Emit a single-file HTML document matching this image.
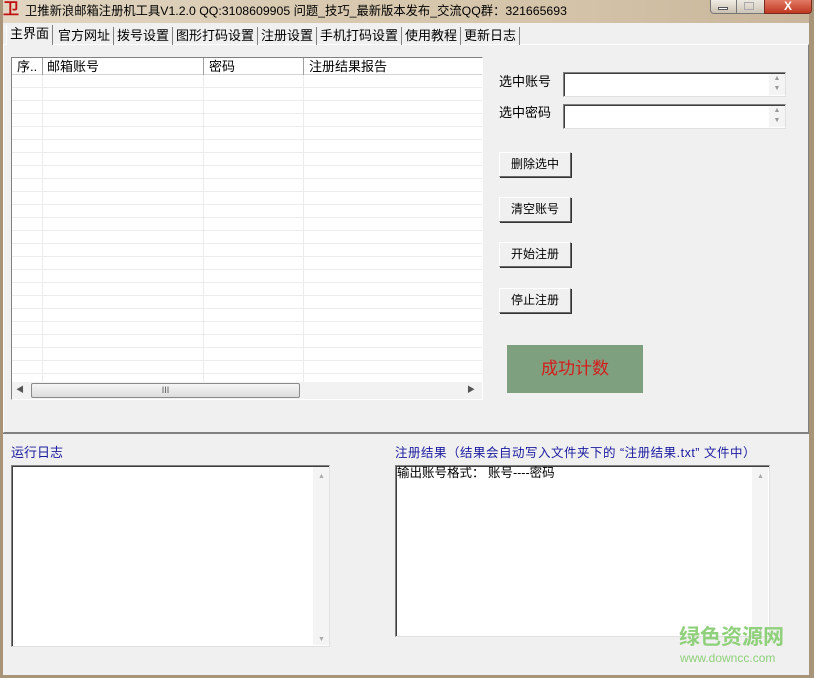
<!DOCTYPE html>
<html><head><meta charset="utf-8"><style>
*{margin:0;padding:0;box-sizing:border-box}
body{width:814px;height:678px;overflow:hidden;background:#f0f0f0;font-family:"Liberation Sans","Noto Sans CJK SC",sans-serif;font-size:12px;color:#000;position:relative}
.a{position:absolute}
.t{position:absolute;white-space:nowrap;line-height:14px}
.btn{position:absolute;width:72px;height:25px;background:#f0f0f0;border:1px solid;border-color:#fff #696969 #696969 #fff;box-shadow:1px 1px 0 #333;text-align:center;line-height:22px}
.in{position:absolute;background:#fff;border:1px solid;border-color:#808080 #e0e0e0 #e0e0e0 #808080;box-shadow:inset 1px 1px 0 #404040}
.sb{position:absolute;background:#f4f4f4;width:16px}
.tab{position:absolute;top:27px;height:18px;line-height:17px;padding:0 3px;border-right:1px solid #808080;font-size:13px}
</style></head><body>
<div class="a" style="left:0;top:0;width:814px;height:23px;background:linear-gradient(90deg,#e2d6c2,#d8c9b0 40%,#d4c3a8 70%,#c8b59b)"></div>
<div class="a" style="left:0;top:0;width:3px;height:678px;background:#a89478"></div>
<div class="a" style="left:809px;top:0;width:5px;height:678px;background:#a89478"></div>
<div class="a" style="left:0;top:675px;width:814px;height:3px;background:#a89478"></div>
<div class="t" style="left:3px;top:3px;font-size:16px;font-weight:bold;color:#c01010;font-family:'Liberation Serif',serif">卫</div>
<div class="t" style="left:25px;top:3px;font-size:12.3px;line-height:16px">卫推新浪邮箱注册机工具V1.2.0 QQ:3108609905 问题_技巧_最新版本发布_交流QQ群：321665693</div>
<div class="a" style="left:710px;top:0;width:27px;height:14px;border:1px solid #777;border-top:0;border-radius:0 0 0 4px;background:linear-gradient(#f0ece4,#c9c0b0)"></div>
<div class="a" style="left:718px;top:7px;width:10px;height:3px;background:#fff;border:1px solid #555"></div>
<div class="a" style="left:737px;top:0;width:27px;height:14px;border-bottom:1px solid #777;background:linear-gradient(#ece8e0,#cdc5b8)"></div>
<div class="a" style="left:744px;top:2px;width:10px;height:8px;border:1px solid #aaa"></div>
<div class="a" style="left:764px;top:0;width:48px;height:14px;border:1px solid #7a2a20;border-top:0;border-radius:0 0 4px 0;background:linear-gradient(#e07a66,#c03820);color:#fff;text-align:center;font-weight:bold;font-size:12px;line-height:12px">X</div>
<div class="a" style="left:3px;top:44px;width:806px;height:389px;border:1px solid;border-color:#fff #808080 #808080 #fff"></div>
<div class="a" style="left:3px;top:23px;width:806px;height:21px;background:#f0f0f0"></div>
<div class="tab" style="left:6px;top:25px;height:20px;border-left:1px solid #fff;background:#f0f0f0">主界面</div>
<div class="tab" style="left:55px">官方网址</div>
<div class="tab" style="left:114px">拨号设置</div>
<div class="tab" style="left:173px">图形打码设置</div>
<div class="tab" style="left:258px">注册设置</div>
<div class="tab" style="left:317px">手机打码设置</div>
<div class="tab" style="left:402px">使用教程</div>
<div class="tab" style="left:461px">更新日志</div>
<div class="a" style="left:11px;top:57px;width:472px;height:343px;background:#fff;border:1px solid;border-color:#808080 #fff #fff #808080"></div>
<div class="a" style="left:12px;top:58px;width:470px;height:17px;background:#fff;border-bottom:1px solid #d5d5d5"></div>
<div class="a" style="left:42px;top:58px;width:1px;height:17px;background:#a0a0a0"></div>
<div class="a" style="left:203px;top:58px;width:1px;height:17px;background:#a0a0a0"></div>
<div class="a" style="left:303px;top:58px;width:1px;height:17px;background:#a0a0a0"></div>
<div class="t" style="left:17px;top:60px;font-size:13px">序..</div>
<div class="t" style="left:47px;top:60px;font-size:13px">邮箱账号</div>
<div class="t" style="left:209px;top:60px;font-size:13px">密码</div>
<div class="t" style="left:309px;top:60px;font-size:13px">注册结果报告</div>
<div class="a" style="left:12px;top:75px;width:470px;height:307px;background:repeating-linear-gradient(#fff 0 12px,#ececec 12px 13px)"></div>
<div class="a" style="left:42px;top:75px;width:1px;height:307px;background:#ececec"></div>
<div class="a" style="left:203px;top:75px;width:1px;height:307px;background:#ececec"></div>
<div class="a" style="left:303px;top:75px;width:1px;height:307px;background:#ececec"></div>
<div class="a" style="left:12px;top:382px;width:470px;height:17px;background:#f2f2f2"></div>
<div class="t" style="left:16px;top:383px;font-size:8px;color:#555">◀</div>
<div class="t" style="left:467px;top:383px;font-size:8px;color:#555">▶</div>
<div class="a" style="left:31px;top:383px;width:269px;height:15px;border:1px solid #8a8a8a;border-radius:2px;background:linear-gradient(#f6f6f6,#dcdcdc);text-align:center;font-size:9px;line-height:13px;color:#555">III</div>
<div class="t" style="left:499px;top:75px;font-size:13px">选中账号</div>
<div class="in" style="left:563px;top:72px;width:223px;height:25px"></div>
<div class="sb" style="left:769px;top:74px;height:21px;font-size:7px;color:#999;line-height:10px;text-align:center">▲<br>▼</div>
<div class="t" style="left:499px;top:106px;font-size:13px">选中密码</div>
<div class="in" style="left:563px;top:104px;width:223px;height:25px"></div>
<div class="sb" style="left:769px;top:106px;height:21px;font-size:7px;color:#999;line-height:10px;text-align:center">▲<br>▼</div>
<div class="btn" style="left:499px;top:152px">删除选中</div>
<div class="btn" style="left:499px;top:197px">清空账号</div>
<div class="btn" style="left:499px;top:242px">开始注册</div>
<div class="btn" style="left:499px;top:288px">停止注册</div>
<div class="a" style="left:507px;top:345px;width:136px;height:48px;background:#7fa07f;color:#d61c1c;font-size:17px;text-align:center;line-height:48px">成功计数</div>
<div class="a" style="left:3px;top:433px;width:806px;height:1px;background:#808080"></div>
<div class="t" style="left:11px;top:446px;color:#1a1aa0;font-size:13px">运行日志</div>
<div class="t" style="left:395px;top:446px;color:#1a1aa0;font-size:12.5px;letter-spacing:0.5px">注册结果（结果会自动写入文件夹下的 “注册结果.txt” 文件中）</div>
<div class="in" style="left:11px;top:465px;width:319px;height:182px"></div>
<div class="sb" style="left:313px;top:467px;height:178px"></div>
<div class="t" style="left:318px;top:470px;font-size:7px;color:#aaa">▲</div>
<div class="t" style="left:318px;top:633px;font-size:7px;color:#aaa">▼</div>
<div class="in" style="left:395px;top:465px;width:375px;height:172px"></div>
<div class="sb" style="left:752px;top:467px;height:168px"></div>
<div class="t" style="left:757px;top:470px;font-size:7px;color:#aaa">▲</div>
<div class="t" style="left:757px;top:623px;font-size:7px;color:#aaa">▼</div>
<div class="t" style="left:397px;top:466px;font-size:12.5px">输出账号格式： 账号----密码</div>
<div class="t" style="left:679px;top:625px;font-size:21px;line-height:26px;color:#8fd07a;font-weight:bold">绿色资源网</div>
<div class="t" style="left:680px;top:651px;font-size:12px;color:#8fd07a">www.downcc.com</div>
</body></html>
